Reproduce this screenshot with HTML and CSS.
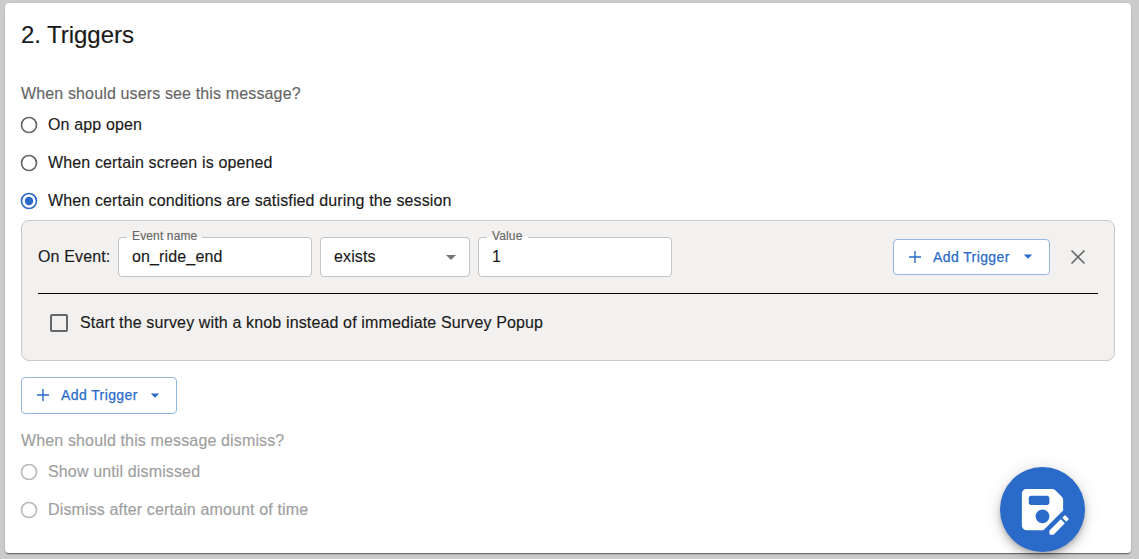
FILE: index.html
```html
<!DOCTYPE html>
<html lang="en">
<head>
<meta charset="utf-8">
<title>Triggers</title>
<link rel="stylesheet" href="styles.css">
</head>
<body>
<main class="card">
  <h2 class="title">2. Triggers</h2>
  <div class="legend">When should users see this message?</div>
  <div class="option">
    <svg class="radio" viewBox="0 0 20 20"><circle cx="10" cy="10" r="7.5"/></svg>
    <span>On app open</span>
  </div>
  <div class="option">
    <svg class="radio" viewBox="0 0 20 20"><circle cx="10" cy="10" r="7.5"/></svg>
    <span>When certain screen is opened</span>
  </div>
  <div class="option">
    <svg class="radio selected" viewBox="0 0 20 20"><circle cx="10" cy="10" r="7.5"/><circle class="dot" cx="10" cy="10" r="4.2"/></svg>
    <span>When certain conditions are satisfied during the session</span>
  </div>
  <section class="panel">
    <div class="event-row">
      <span class="event-label">On Event:</span>
      <div class="field wide"><span class="field-label">Event name</span><span>on_ride_end</span></div>
      <div class="field select"><span>exists</span><svg class="arrow" viewBox="0 0 24 24"><path d="M7 10l5 5 5-5z"/></svg></div>
      <div class="field wide"><span class="field-label">Value</span><span>1</span></div>
      <div class="actions">
        <div class="button">
          <svg class="plus" viewBox="0 0 12 12"><path d="M6 0v12M0 6h12"/></svg>
          <span>Add Trigger</span>
          <svg class="caret" viewBox="0 0 10 5"><path d="M.8 .6h8.400L5 4.800z"/></svg>
        </div>
        <svg class="close" viewBox="0 0 16 16"><path d="M1.5 1.5l13 13M14.5 1.5l-13 13"/></svg>
      </div>
    </div>
    <div class="check-row">
      <svg class="checkbox" viewBox="0 0 18 18"><rect x="1" y="1" width="16" height="16" rx="1"/></svg>
      <span>Start the survey with a knob instead of immediate Survey Popup</span>
    </div>
  </section>
  <div class="button outer">
    <svg class="plus" viewBox="0 0 12 12"><path d="M6 0v12M0 6h12"/></svg>
    <span>Add Trigger</span>
    <svg class="caret" viewBox="0 0 10 5"><path d="M.8 .6h8.400L5 4.800z"/></svg>
  </div>
  <div class="disabled">
    <div class="legend">When should this message dismiss?</div>
    <div class="option">
      <svg class="radio" viewBox="0 0 20 20"><circle cx="10" cy="10" r="7.5"/></svg>
      <span>Show until dismissed</span>
    </div>
    <div class="option">
      <svg class="radio" viewBox="0 0 20 20"><circle cx="10" cy="10" r="7.5"/></svg>
      <span>Dismiss after certain amount of time</span>
    </div>
  </div>
</main>
<div class="fab">
  <svg viewBox="0 0 24 24"><path fill-rule="evenodd" d="M21 12.4V7.830c0-.53-.21-1.040-.59-1.410l-2.830-2.830A2 2 0 0 0 16.170 3H5a2 2 0 0 0-2 2v14c0 1.100.9 2 2 2h7.400zM15 15a3 3 0 1 1-6 0 3 3 0 0 1 6 0zM7 6h7c.55 0 1 .45 1 1v2c0 .55-.45 1-1 1H7c-.55 0-1-.45-1-1V7c0-.55.45-1 1-1z"/><path d="M19.990 16.250l1.770 1.770-4.840 4.840a.5.5 0 0 1-.35.14H15.500a.5.5 0 0 1-.5-.5v-1.060c0-.13.05-.26.15-.35zM23.250 16.510l-.85.85-1.770-1.770.85-.85c.2-.2.51-.2.71 0l1.060 1.060c.2.2.2.52 0 .71z"/></svg>
</div>
</body>
</html>
```

FILE: styles.css
```css
* { box-sizing: border-box; }

body {
  margin: 0;
  height: 559px;
  padding: 3px 8px 6px 5px;
  overflow: hidden;
  background: #cbcbcb;
  color: #1a1a1a;
  font: 16px/24px "Liberation Sans", Arial, sans-serif;
  letter-spacing: 0.14px;
  -webkit-text-stroke: 0.15px currentColor;
}

svg { display: block; flex: none; }

.card {
  height: 550px;
  padding: 16px;
  border-radius: 4px;
  background: #fff;
  box-shadow: 0 2px 1px -1px rgba(0, 0, 0, 0.3), 0 1px 1px rgba(0, 0, 0, 0.24), 0 1px 3px rgba(0, 0, 0, 0.12);
}

.title {
  height: 62px;
  margin: 0;
  font-size: 24px;
  line-height: 32px;
  font-weight: 400;
  letter-spacing: -0.05px;
}

.legend { height: 25px; line-height: 25px; color: #666; }

.option { display: flex; align-items: center; height: 38px; gap: 9px; }
.radio { width: 20px; height: 20px; margin-left: -2px; fill: none; stroke: #666; stroke-width: 1.65; }
.radio.selected { stroke: #2a6bc9; }
.dot { fill: #2a6bc9; stroke: none; }

.panel {
  height: 141px;
  width: 1094px;
  padding: 16px;
  border: 1px solid #c9c9c9;
  border-radius: 8px;
  background: #f3f1f0;
}

.event-row { display: flex; height: 57px; padding-bottom: 17px; border-bottom: 1px solid #000; gap: 8px; }
.event-label { width: 72px; line-height: 39px; white-space: nowrap; }

.field {
  display: flex;
  position: relative;
  align-items: center;
  height: 40px;
  padding: 0 13px;
  border: 1px solid #c3c3c3;
  border-radius: 4px;
  background: #fff;
}
.wide { width: 194px; }
.select { width: 150px; justify-content: space-between; padding-right: 6px; }
.arrow { width: 24px; height: 24px; fill: #757575; }

/* Floating label that interrupts the field border */
.field-label {
  position: absolute;
  top: -9px;
  left: 8px;
  padding: 0 5px;
  color: #666;
  background: linear-gradient(#fff, #fff) 0 8px / 100% 1px no-repeat;
  font-size: 12px;
  line-height: 14px;
}

.actions { display: flex; align-items: center; margin: 0 12px 0 auto; gap: 20px; }

.button {
  display: flex;
  align-items: center;
  width: 157px;
  height: 36px;
  padding: 0 16px 0 15px;
  border: 1px solid #94b5e4;
  border-radius: 4px;
  background: #fff;
  color: #2a6bc9;
  font-size: 14px;
  letter-spacing: 0.4px;
  -webkit-text-stroke-width: 0.25px;
}
.button span { margin-left: 12px; white-space: nowrap; }
.plus { width: 12px; height: 12px; fill: none; stroke: currentColor; stroke-width: 1.4; }
.caret { width: 10px; height: 5px; margin-left: auto; fill: currentColor; }
.close { width: 16px; height: 16px; fill: none; stroke: #666; stroke-width: 1.6; }

.check-row { display: flex; align-items: center; height: 58px; padding-left: 12px; gap: 12px; }
.checkbox { width: 18px; height: 18px; fill: none; stroke: #666; stroke-width: 2; }

.outer { width: 156px; height: 37px; margin: 16px 0 14px; padding-bottom: 1px; }
.disabled .legend, .disabled .option { color: #9e9e9e; }
.disabled .radio { stroke: #b9b9b9; }

.fab {
  display: flex;
  position: absolute;
  left: 1000px;
  top: 467px;
  width: 85px;
  height: 85px;
  align-items: center;
  justify-content: center;
  border-radius: 50%;
  background: #2a6bc9;
  box-shadow: 0 3px 5px -1px rgba(0, 0, 0, 0.2), 0 6px 10px rgba(0, 0, 0, 0.14), 0 1px 18px rgba(0, 0, 0, 0.12);
}
.fab svg { width: 55px; height: 55px; fill: #fff; }
```
